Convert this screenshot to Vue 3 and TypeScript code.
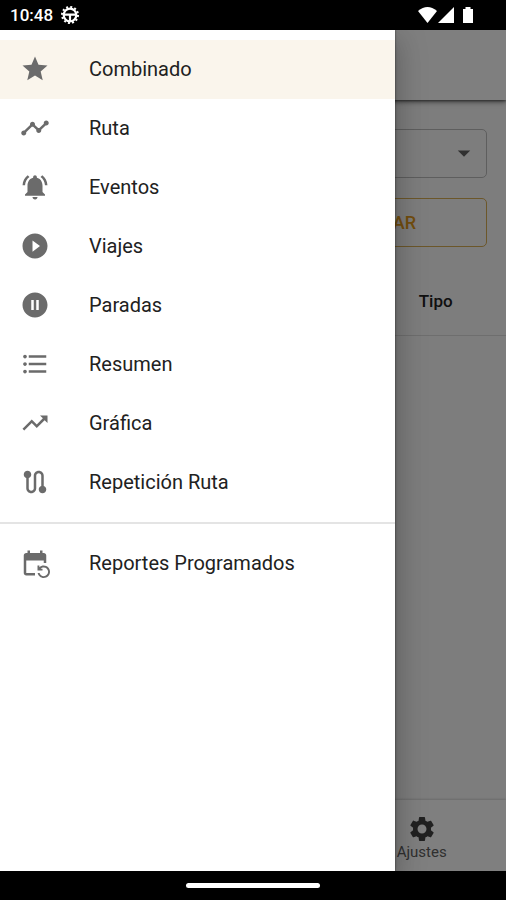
<script setup lang="ts">
import { ref } from 'vue'

interface MenuItem {
  id: string
  label: string
  icon: string
}

const reports: MenuItem[] = [
  { id: 'combined', label: 'Combinado', icon: 'M12 17.27 18.18 21l-1.64-7.03L22 9.24l-7.19-.61L12 2 9.19 8.63 2 9.24l5.46 4.73L5.82 21z' },
  { id: 'route', label: 'Ruta', icon: 'M23 8c0 1.1-.9 2-2 2-.18 0-.35-.02-.51-.07l-3.56 3.55c.05.16.07.34.07.52 0 1.1-.9 2-2 2s-2-.9-2-2c0-.18.02-.36.07-.52l-2.55-2.55c-.16.05-.34.07-.52.07s-.36-.02-.52-.07l-4.55 4.56c.05.16.07.33.07.51 0 1.1-.9 2-2 2s-2-.9-2-2 .9-2 2-2c.18 0 .35.02.51.07l4.56-4.55C8.02 9.36 8 9.18 8 9c0-1.1.9-2 2-2s2 .9 2 2c0 .18-.02.36-.07.52l2.55 2.55c.16-.05.34-.07.52-.07s.36.02.52.07l3.55-3.56C19.02 8.35 19 8.18 19 8c0-1.1.9-2 2-2s2 .9 2 2z' },
  { id: 'events', label: 'Eventos', icon: 'M7.58 4.08 6.15 2.65C3.75 4.48 2.17 7.3 2.03 10.5h2c.15-2.65 1.51-4.97 3.55-6.42zm12.39 6.42h2c-.15-3.2-1.73-6.02-4.12-7.85l-1.42 1.43c2.02 1.45 3.39 3.77 3.54 6.42zM18 11c0-3.07-1.64-5.64-4.5-6.32V4c0-.83-.67-1.5-1.5-1.5s-1.5.67-1.5 1.5v.68C7.63 5.36 6 7.92 6 11v5l-2 2v1h16v-1l-2-2v-5zm-6 11c.14 0 .27-.01.4-.04.65-.14 1.18-.58 1.44-1.18.1-.24.15-.5.15-.78h-4c.01 1.1.9 2 2.01 2z' },
  { id: 'trips', label: 'Viajes', icon: 'M12 2C6.48 2 2 6.48 2 12s4.48 10 10 10 10-4.48 10-10S17.52 2 12 2zm-2 14.5v-9l6 4.5-6 4.5z' },
  { id: 'stops', label: 'Paradas', icon: 'M12 2C6.48 2 2 6.48 2 12s4.48 10 10 10 10-4.48 10-10S17.52 2 12 2zm-1 14H9V8h2v8zm4 0h-2V8h2v8z' },
  { id: 'summary', label: 'Resumen', icon: 'M4 10.5c-.83 0-1.5.67-1.5 1.5s.67 1.5 1.5 1.5 1.5-.67 1.5-1.5-.67-1.5-1.5-1.5zm0-6c-.83 0-1.5.67-1.5 1.5S3.17 7.5 4 7.5 5.5 6.83 5.5 6 4.83 4.5 4 4.5zm0 12c-.83 0-1.5.68-1.5 1.5s.68 1.5 1.5 1.5 1.5-.68 1.5-1.5-.67-1.5-1.5-1.5zM7 19h14v-2H7v2zm0-6h14v-2H7v2zm0-8v2h14V5H7z' },
  { id: 'chart', label: 'Gráfica', icon: 'm16 6 2.29 2.29-4.88 4.88-4-4L2 16.59 3.41 18l6-6 4 4 6.3-6.29L22 12V6z' },
  { id: 'replay', label: 'Repetición Ruta', icon: 'M19 15.18V7c0-2.21-1.79-4-4-4s-4 1.79-4 4v10c0 1.1-.9 2-2 2s-2-.9-2-2V8.82C8.16 8.4 9 7.3 9 6c0-1.66-1.34-3-3-3S3 4.34 3 6c0 1.3.84 2.4 2 2.82V17c0 2.21 1.79 4 4 4s4-1.79 4-4V7c0-1.1.9-2 2-2s2 .9 2 2v8.18c-1.16.41-2 1.51-2 2.82 0 1.66 1.34 3 3 3s3-1.34 3-3c0-1.3-.84-2.4-2-2.82z' },
]

const scheduled: MenuItem[] = [
  { id: 'scheduled', label: 'Reportes Programados', icon: 'M21 12V6c0-1.1-.9-2-2-2h-1V2h-2v2H8V2H6v2H5c-1.1 0-2 .9-2 2v14c0 1.1.9 2 2 2h7v-2H5V10h14v2h2zm-5.36 8c.43 1.45 1.77 2.5 3.36 2.5 1.93 0 3.5-1.57 3.5-3.5s-1.57-3.5-3.5-3.5c-.95 0-1.82.38-2.45 1H18V18h-4v-4h1.5v1.43c.9-.88 2.14-1.43 3.5-1.43 2.76 0 5 2.24 5 5s-2.24 5-5 5c-2.42 0-4.44-1.72-4.9-4h1.54z' },
]

const groups: MenuItem[][] = [reports, scheduled]

const tabs: MenuItem[] = [
  { id: 'map', label: 'Mapa', icon: 'M20.5 3l-.16.03L15 5.1 9 3 3.36 4.9c-.21.07-.36.25-.36.48V20.5c0 .28.22.5.5.5l.16-.03L9 18.9l6 2.1 5.64-1.9c.21-.07.36-.25.36-.48V3.5c0-.28-.22-.5-.5-.5zM15 19l-6-2.11V5l6 2.11V19z' },
  { id: 'reports', label: 'Reportes', icon: 'M19 3H5c-1.1 0-2 .9-2 2v14c0 1.1.9 2 2 2h14c1.1 0 2-.9 2-2V5c0-1.1-.9-2-2-2zM9 17H7v-5h2v5zm4 0h-2V7h2v10zm4 0h-2v-4h2v4z' },
  { id: 'settings', label: 'Ajustes', icon: 'M19.14 12.94c.04-.3.06-.61.06-.94 0-.32-.02-.64-.07-.94l2.03-1.58c.18-.14.23-.41.12-.61l-1.92-3.32c-.12-.22-.37-.29-.59-.22l-2.39.96c-.5-.38-1.03-.7-1.62-.94l-.36-2.54c-.04-.24-.24-.41-.48-.41h-3.84c-.24 0-.43.17-.47.41l-.36 2.54c-.59.24-1.13.57-1.62.94l-2.39-.96c-.22-.08-.47 0-.59.22L2.74 8.87c-.12.21-.08.47.12.61l2.03 1.58c-.05.3-.09.63-.09.94s.02.64.07.94l-2.03 1.58c-.18.14-.23.41-.12.61l1.92 3.32c.12.22.37.29.59.22l2.39-.96c.5.38 1.03.7 1.62.94l.36 2.54c.05.24.24.41.48.41h3.84c.24 0 .44-.17.47-.41l.36-2.54c.59-.24 1.13-.56 1.62-.94l2.39.96c.22.08.47 0 .59-.22l1.92-3.32c.12-.22.07-.47-.12-.61l-2.01-1.58zM12 15.6c-1.98 0-3.6-1.62-3.6-3.6s1.62-3.6 3.6-3.6 3.6 1.62 3.6 3.6-1.62 3.6-3.6 3.6z' },
]

const selected = ref('combined')
const period = ref('today')
</script>

<template>
  <div class="screen">
    <div class="status-bar">
      <span class="clock">10:48</span>
      <svg class="status-wheel" viewBox="0 0 20 20" aria-hidden="true">
        <circle cx="10" cy="10" r="8" fill="none" stroke="currentColor" stroke-width="2" stroke-dasharray="2 2.19" />
        <circle cx="10" cy="10" r="6.3" fill="none" stroke="currentColor" stroke-width="2.2" />
        <path d="M4 8.6h12v2.2h-4.9V17H8.9v-6.2H4z" fill="currentColor" />
      </svg>
      <svg class="status-signals" viewBox="0 0 56 18" aria-hidden="true">
        <path d="M0 5Q9.5-3 19 5L9.5 17z" fill="currentColor" />
        <path d="M20 17 36 1v16z" fill="currentColor" />
        <path d="M45 3h2.5V1h5v2H55v14H45z" fill="currentColor" />
      </svg>
    </div>

    <div class="stage">
      <div class="page">
        <header class="app-bar"></header>
        <main class="content">
          <form class="filters" @submit.prevent>
            <div class="select-box">
              <select v-model="period" aria-label="Periodo">
                <option value="today">Hoy</option>
                <option value="yesterday">Ayer</option>
              </select>
              <svg class="caret" viewBox="0 0 24 24" aria-hidden="true"><path d="m7 10 5 5 5-5z" /></svg>
            </div>
            <div class="actions">
              <button type="submit" class="outlined">Mostrar</button>
              <button type="button" class="outlined">Guardar</button>
            </div>
          </form>
          <table class="results">
            <thead>
              <tr>
                <th class="wide">ID</th>
                <th class="wide">Hora</th>
                <th>Tipo</th>
              </tr>
            </thead>
          </table>
        </main>
        <nav class="bottom-nav">
          <a v-for="tab in tabs" :key="tab.id" :href="'#' + tab.id" class="tab">
            <svg class="icon" viewBox="0 0 24 24" aria-hidden="true"><path :d="tab.icon" /></svg>
            <span>{{ tab.label }}</span>
          </a>
        </nav>
      </div>

      <div class="backdrop"></div>

      <nav class="drawer">
        <ul v-for="(group, index) in groups" :key="index" class="menu">
          <li v-for="item in group" :key="item.id">
            <a
              :href="'#' + item.id"
              class="menu-item"
              :class="{ selected: item.id === selected }"
              @click="selected = item.id"
            >
              <svg class="icon" viewBox="0 0 24 24" aria-hidden="true"><path :d="item.icon" /></svg>
              <span>{{ item.label }}</span>
            </a>
          </li>
        </ul>
      </nav>
    </div>

    <div class="gesture-bar"><span class="handle"></span></div>
  </div>
</template>

<style>
body {
  margin: 0;
}
</style>

<style scoped>
.screen {
  display: flex;
  flex-direction: column;
  min-height: 100vh;
  background: #000;
  font-family: Roboto, 'Liberation Sans', sans-serif;
  color: #212121;
}

.status-bar {
  display: flex;
  align-items: center;
  gap: 7px;
  height: 30px;
  padding: 0 32px 0 10px;
  box-sizing: border-box;
  color: #fff;
}

.clock {
  font-size: 17px;
  font-weight: 500;
  line-height: 30px;
}

.status-wheel {
  width: 20px;
  height: 20px;
}

.status-signals {
  width: 56px;
  height: 18px;
  margin-left: auto;
}

.stage {
  position: relative;
  display: flex;
  flex: 1;
  overflow: hidden;
}

.page {
  display: flex;
  flex: 1;
  flex-direction: column;
  min-width: 0;
  background: #fafafa;
}

.app-bar {
  height: 70px;
  background: #fff;
  box-shadow: 0 2px 5px rgba(0, 0, 0, 0.5), 0 1px 2px rgba(0, 0, 0, 0.4);
}

.content {
  flex: 1;
}

.filters {
  display: grid;
  gap: 20px;
  padding: 29px 19px 20px;
}

.select-box {
  position: relative;
}

.select-box select {
  width: 100%;
  height: 49px;
  padding: 0 48px 0 16px;
  border: 1px solid #bdbdbd;
  border-radius: 5px;
  appearance: none;
  background: transparent;
  color: inherit;
  font: 400 20px Roboto, 'Liberation Sans', sans-serif;
}

.caret {
  position: absolute;
  top: 9px;
  right: 8px;
  width: 30px;
  height: 30px;
  fill: #616161;
  pointer-events: none;
}

.actions {
  display: grid;
  grid-template-columns: 1fr 1fr;
  gap: 20px;
}

.outlined {
  height: 49px;
  padding: 0;
  border: 1px solid #d9ae55;
  border-radius: 5px;
  background: transparent;
  color: #e69c1c;
  font: 500 18px Roboto, 'Liberation Sans', sans-serif;
  text-transform: uppercase;
}

.results {
  width: 100%;
  border-collapse: collapse;
  table-layout: fixed;
}

.results th {
  height: 68px;
  padding: 0 21px;
  border-bottom: 1px solid #dcdcdc;
  font-size: 17px;
  font-weight: 500;
  text-align: left;
}

.results .wide {
  width: 31%;
}

.bottom-nav {
  display: grid;
  grid-template-columns: repeat(3, 1fr);
  height: 71px;
  background: #fff;
  box-shadow: 0 -1px 2px rgba(0, 0, 0, 0.15);
}

.tab {
  display: flex;
  flex-direction: column;
  align-items: center;
  justify-content: center;
  padding-top: 3px;
  color: #616161;
  font-size: 15px;
  line-height: 17px;
  text-decoration: none;
}

.tab .icon {
  fill: #424242;
}

.icon {
  flex: none;
  width: 30px;
  height: 30px;
  fill: #6b6b6b;
}

.backdrop {
  position: absolute;
  inset: 0;
  background: rgba(0, 0, 0, 0.5);
}

.drawer {
  position: absolute;
  inset: 0 auto 0 0;
  width: 78%;
  overflow-y: auto;
  background: #fff;
  box-shadow: 0 0 2px rgba(0, 0, 0, 0.6), 0 8px 10px -5px rgba(0, 0, 0, 0.2),
    0 16px 24px 2px rgba(0, 0, 0, 0.14), 0 6px 30px 5px rgba(0, 0, 0, 0.12);
}

.menu {
  margin: 0;
  padding: 10px 0;
  list-style: none;
}

.menu + .menu {
  border-top: 2px solid #e4e4e4;
}

.menu-item {
  display: flex;
  align-items: center;
  gap: 39px;
  box-sizing: border-box;
  height: 59px;
  padding: 0 20px 1px;
  color: #212121;
  font-size: 20px;
  line-height: 30px;
  text-decoration: none;
}

.menu-item.selected {
  background: #faf5ec;
}

.gesture-bar {
  display: flex;
  align-items: center;
  justify-content: center;
  height: 29px;
}

.handle {
  width: 134px;
  height: 5px;
  border-radius: 3px;
  background: #fff;
}
</style>
